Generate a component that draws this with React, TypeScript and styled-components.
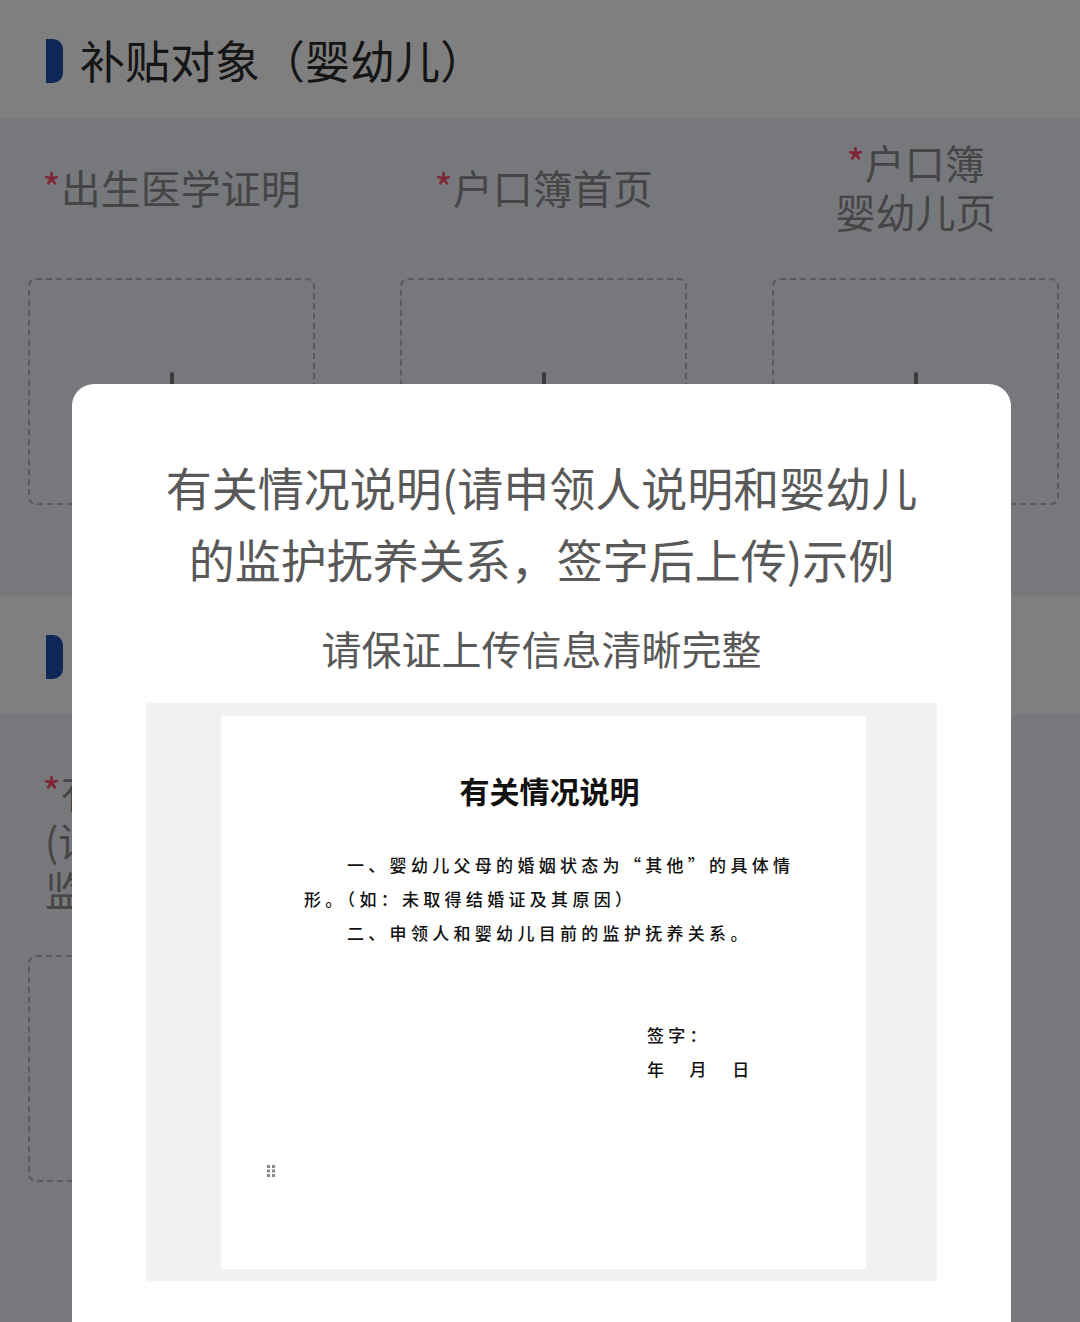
import React from 'react';
import styled, { createGlobalStyle } from 'styled-components';

const GlobalStyle = createGlobalStyle`
  html, body {
    margin: 0;
    padding: 0;
    background: #eef0f8;
    font-family: "Noto Sans CJK SC", "Noto Sans", sans-serif;
  }
  * {
    box-sizing: border-box;
  }
`;

interface UploadItem {
  lines: string[];
}

const babyItems: UploadItem[] = [
  { lines: ['出生医学证明'] },
  { lines: ['户口簿首页'] },
  { lines: ['户口簿', '婴幼儿页'] },
];

const noteItems: UploadItem[] = [
  { lines: ['有关情况说明', '(请申领人说明', '监护抚养关系)'] },
];

const UploadField: React.FC<UploadItem> = ({ lines }) => (
  <Field>
    <Label>
      {lines.map((line, i) => (
        <LabelLine key={line}>
          {i === 0 && <Star>*</Star>}
          {line}
        </LabelLine>
      ))}
    </Label>
    <DropZone>
      <PlusMark />
    </DropZone>
  </Field>
);

const Section: React.FC<{ title: string; items: UploadItem[]; top: number }> = ({
  title,
  items,
  top,
}) => (
  <>
    <SectionHeader>
      <Marker />
      <SectionTitle>{title}</SectionTitle>
    </SectionHeader>
    <FieldGrid $top={top}>
      {items.map((item) => (
        <UploadField key={item.lines.join('')} lines={item.lines} />
      ))}
    </FieldGrid>
  </>
);

const GripIcon = () => (
  <svg width="8" height="12" viewBox="0 0 8 12">
    {[0, 1, 2].map((row) =>
      [0, 1].map((col) => (
        <rect key={`${row}-${col}`} x={col * 5} y={row * 4.5} width="3" height="3" fill="#8a8a8a" />
      )),
    )}
  </svg>
);

export default function App() {
  return (
    <>
      <GlobalStyle />
      <Page>
        <Section title="补贴对象（婴幼儿）" items={babyItems} top={19} />
        <Section title="补充材料" items={noteItems} top={53} />
      </Page>
      <Overlay>
        <Modal>
          <ModalTitle>有关情况说明(请申领人说明和婴幼儿的监护抚养关系，签字后上传)示例</ModalTitle>
          <ModalHint>请保证上传信息清晰完整</ModalHint>
          <Sample>
            <Paper>
              <PaperTitle>有关情况说明</PaperTitle>
              <PaperBody>
                <PaperLine $indent>一、婴幼儿父母的婚姻状态为“其他”的具体情</PaperLine>
                <PaperLine>形。（如：未取得结婚证及其原因）</PaperLine>
                <PaperLine $indent>二、申领人和婴幼儿目前的监护抚养关系。</PaperLine>
              </PaperBody>
              <Signature>
                <PaperLine>签字：</PaperLine>
                <PaperLine>年　月　日</PaperLine>
              </Signature>
              <Grip>
                <GripIcon />
              </Grip>
            </Paper>
          </Sample>
        </Modal>
      </Overlay>
    </>
  );
}

const Page = styled.div`
  min-height: 1322px;
  background: #eef0f8;
`;

const SectionHeader = styled.div`
  height: 118px;
  background: #ffffff;
  display: flex;
  align-items: center;
  padding-left: 46px;
  gap: 17px;
`;

const Marker = styled.div`
  width: 17px;
  height: 44px;
  margin-top: 4px;
  background: #1c4fae;
  border-radius: 0 10px 10px 0;
`;

const SectionTitle = styled.h2`
  margin: 0;
  font-size: 45px;
  font-weight: 400;
  color: #2a2a2a;
  line-height: 1;
`;

const FieldGrid = styled.div<{ $top: number }>`
  display: grid;
  grid-template-columns: repeat(3, 287px);
  column-gap: 85px;
  padding: ${(p) => p.$top}px 0 91px 28px;
`;

const Field = styled.div`
  display: flex;
  flex-direction: column;
  gap: 41px;
`;

const Label = styled.div`
  min-height: 100px;
  display: flex;
  flex-direction: column;
  justify-content: center;
  align-items: center;
  text-align: center;
  font-size: 40px;
  line-height: 49px;
  color: #8a8a8c;
`;

const LabelLine = styled.span`
  display: block;
  white-space: nowrap;
`;

const Star = styled.span`
  color: #ff4d6a;
`;

const DropZone = styled.div`
  height: 227px;
  border: 2px dashed #b4b4b4;
  border-radius: 8px;
  display: flex;
  align-items: center;
  justify-content: center;
`;

const PlusMark = styled.div`
  position: relative;
  width: 40px;
  height: 40px;

  &::before,
  &::after {
    content: '';
    position: absolute;
    background: #777777;
    border-radius: 2px;
  }
  &::before {
    left: 18px;
    top: 0;
    width: 4px;
    height: 40px;
  }
  &::after {
    top: 18px;
    left: 0;
    width: 40px;
    height: 4px;
  }
`;

const Overlay = styled.div`
  position: fixed;
  inset: 0;
  background: rgba(0, 0, 0, 0.5);
  display: flex;
  justify-content: center;
  padding: 384px 0 0 3px;
  overflow: hidden;
`;

const Modal = styled.div`
  width: 939px;
  min-height: 1000px;
  background: #ffffff;
  border-radius: 22px 22px 0 0;
  padding: 66px 74px 40px;
  display: flex;
  flex-direction: column;
  align-items: center;
`;

const ModalTitle = styled.h3`
  margin: 0;
  padding: 0 6px;
  font-size: 46px;
  font-weight: 400;
  line-height: 72px;
  color: #595959;
  text-align: center;
`;

const ModalHint = styled.p`
  margin: 26px 0 0;
  font-size: 40px;
  line-height: 56px;
  color: #595959;
  text-align: center;
`;

const Sample = styled.div`
  margin-top: 27px;
  width: 791px;
  height: 578px;
  background: #f0f2f2;
  border-radius: 4px;
  display: flex;
  justify-content: center;
  padding-top: 13px;
`;

const Paper = styled.div`
  width: 645px;
  height: 553px;
  margin-left: 4px;
  background: #ffffff;
  padding-top: 54px;
  color: #111111;
`;

const PaperTitle = styled.div`
  text-align: center;
  padding-left: 12px;
  font-size: 30px;
  line-height: 40px;
  font-weight: 700;
`;

const PaperBody = styled.div`
  margin-top: 38px;
  padding-left: 83px;
`;

const PaperLine = styled.div<{ $indent?: boolean }>`
  font-size: 17px;
  line-height: 34px;
  font-weight: 500;
  letter-spacing: 4.3px;
  white-space: nowrap;
  padding-left: ${(p) => (p.$indent ? '43px' : '0')};
`;

const Signature = styled.div`
  margin-top: 68px;
  padding-left: 426px;
`;

const Grip = styled.div`
  margin: 79px 0 0 46px;
  line-height: 0;
`;
